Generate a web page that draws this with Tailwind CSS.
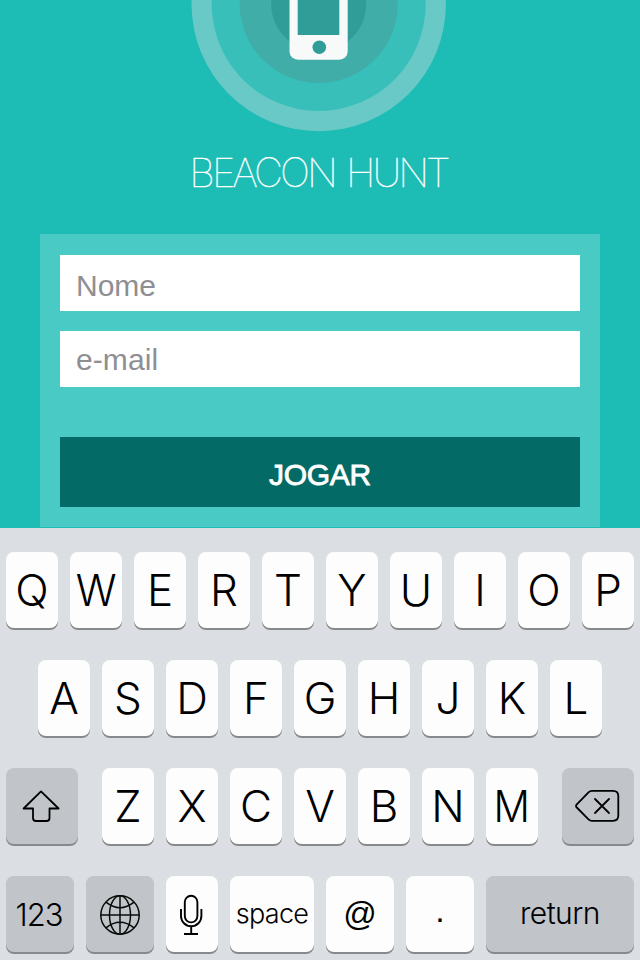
<!DOCTYPE html>
<html lang="pt">
<head>
<meta charset="utf-8">
<title>Beacon Hunt</title>
<script src="https://cdn.jsdelivr.net/npm/@tailwindcss/browser@4"></script>
</head>
<body class="w-[640px] h-[960px] overflow-hidden bg-[#1dbcb5] flex flex-col font-['Liberation_Sans',sans-serif]">
<main class="h-[528px] shrink-0 overflow-hidden flex flex-col items-center">
  <svg class="block shrink-0" width="640" height="140" viewBox="0 0 640 140">
    <circle cx="318.7" cy="4" r="127.2" fill="#68c9c6"/>
    <circle cx="318.7" cy="4" r="107" fill="#38bfb9"/>
    <circle cx="318.7" cy="4" r="79" fill="#41ada8"/>
    <circle cx="318.7" cy="4" r="47.5" fill="#319d98"/>
    <rect x="289.5" y="-50" width="58.2" height="109.7" rx="8.5" fill="#f7faf9"/>
    <rect x="297.7" y="-40" width="41.6" height="75" fill="#319d98"/>
    <circle cx="319.3" cy="47.2" r="6.8" fill="#319d98"/>
  </svg>
  <h1 class="h-[94px] shrink-0 pt-[13px] pr-[3px] text-[40px] leading-[40px] font-thin tracking-[-3px] [word-spacing:3px] text-white whitespace-nowrap font-['Inter',sans-serif] [-webkit-text-stroke:0.4px_white]">BEACON HUNT</h1>
  <form class="w-[560px] h-[293px] shrink-0 bg-[#49cac4] px-5 pt-[21px] flex flex-col text-[30px] text-[#8e8e93]">
    <div class="h-14 bg-white px-4 leading-[61px]">Nome</div>
    <div class="h-14 mt-5 bg-white px-4 leading-[57px] tracking-[0.1px]">e-mail</div>
    <div class="h-[70px] mt-[50px] bg-[#046a65] text-white text-center leading-[75px] text-[30px] tracking-[-0.3px] [-webkit-text-stroke:0.8px_white]">JOGAR</div>
  </form>
</main>
<section class="h-[432px] shrink-0 bg-[#dbdee2] pt-6 px-[6px] flex flex-col gap-8 font-['Inter',sans-serif] font-light text-[44px] leading-[76px] text-black text-center">
  <div class="h-[76px] flex gap-3 *:w-[52px] *:h-[76px] *:rounded-[8px] *:bg-[#fdfdfd] *:shadow-[0_2px_0_#88898c] *:flex *:justify-center">
    <div>Q</div><div><span class="scale-x-[0.96]">W</span></div><div>E</div><div>R</div><div>T</div><div>Y</div><div>U</div><div>I</div><div>O</div><div>P</div>
  </div>
  <div class="h-[76px] px-8 flex gap-3 *:w-[52px] *:h-[76px] *:rounded-[8px] *:bg-[#fdfdfd] *:shadow-[0_2px_0_#88898c] *:flex *:justify-center">
    <div>A</div><div>S</div><div>D</div><div>F</div><div>G</div><div>H</div><div>J</div><div>K</div><div>L</div>
  </div>
  <div class="h-[76px] flex justify-between">
    <div class="w-[72px] rounded-[8px] bg-[#c1c4c9] shadow-[0_2px_0_#88898c]">
      <svg width="72" height="76" viewBox="0 0 72 76" fill="none" stroke="#000" stroke-width="1.8" stroke-linejoin="round"><path d="M35 23.4 L17.6 40.5 H27 V50 Q27 53 30 53 H40.5 Q43.5 53 43.5 50 V40.5 H52.6 Z"/></svg>
    </div>
    <div class="flex gap-3 *:w-[52px] *:h-[76px] *:rounded-[8px] *:bg-[#fdfdfd] *:shadow-[0_2px_0_#88898c] *:flex *:justify-center">
      <div>Z</div><div>X</div><div>C</div><div>V</div><div>B</div><div>N</div><div><span class="scale-x-[0.92]">M</span></div>
    </div>
    <div class="w-[72px] rounded-[8px] bg-[#c1c4c9] shadow-[0_2px_0_#88898c]">
      <svg width="72" height="76" viewBox="0 0 72 76" fill="none" stroke="#000" stroke-width="1.8" stroke-linejoin="round" stroke-linecap="round"><path d="M30 22.8 H51 Q56.3 22.8 56.3 28 V47.5 Q56.3 52.8 51 52.8 H30 Q28 52.8 26.5 51.3 L14.8 39.5 Q13.2 38 14.8 36.3 L26.5 24.3 Q28 22.8 30 22.8 Z M33 31 L47 45 M47 31 L33 45"/></svg>
    </div>
  </div>
  <div class="h-[76px] flex gap-3 *:h-[76px] *:rounded-[8px] *:shadow-[0_2px_0_#88898c]">
    <div class="w-[68px] bg-[#c1c4c9] pr-[2px] text-[31px] leading-[78px] tracking-[-1px]">123</div>
    <div class="w-[68px] bg-[#c1c4c9]">
      <svg width="68" height="76" viewBox="0 0 68 76" fill="none" stroke="#080c08" stroke-width="1.5"><circle cx="34" cy="39" r="19.2"/><ellipse cx="34" cy="39" rx="10.5" ry="19.2"/><path d="M34 19.5 V58.5 M14.5 39 H53.5"/><path d="M20 26.2 Q34 37.4 48 26.2 M20 51.8 Q34 40.6 48 51.8"/></svg>
    </div>
    <div class="w-[52px] bg-[#fdfdfd]">
      <svg width="52" height="76" viewBox="0 0 52 76" fill="none" stroke="#000" stroke-width="1.9"><rect x="18.8" y="19.8" width="12.6" height="26.6" rx="6.3"/><path d="M15 33 V40 A10.2 10.2 0 0 0 35.4 40 V33 M25.2 50.4 V58 M18 58 H32"/></svg>
    </div>
    <div class="w-[84px] bg-[#fdfdfd] text-[27px] leading-[76px] tracking-[-0.7px]">space</div>
    <div class="w-[68px] bg-[#fdfdfd] text-[33px] leading-[76px] font-['Liberation_Sans',sans-serif]">@</div>
    <div class="w-[68px] bg-[#fdfdfd] text-[34px] leading-[68px] font-['Liberation_Sans',sans-serif]">.</div>
    <div class="w-[148px] bg-[#c1c4c9] text-[30px] leading-[74px] tracking-[-0.5px]">return</div>
  </div>
</section>
</body>
</html>
